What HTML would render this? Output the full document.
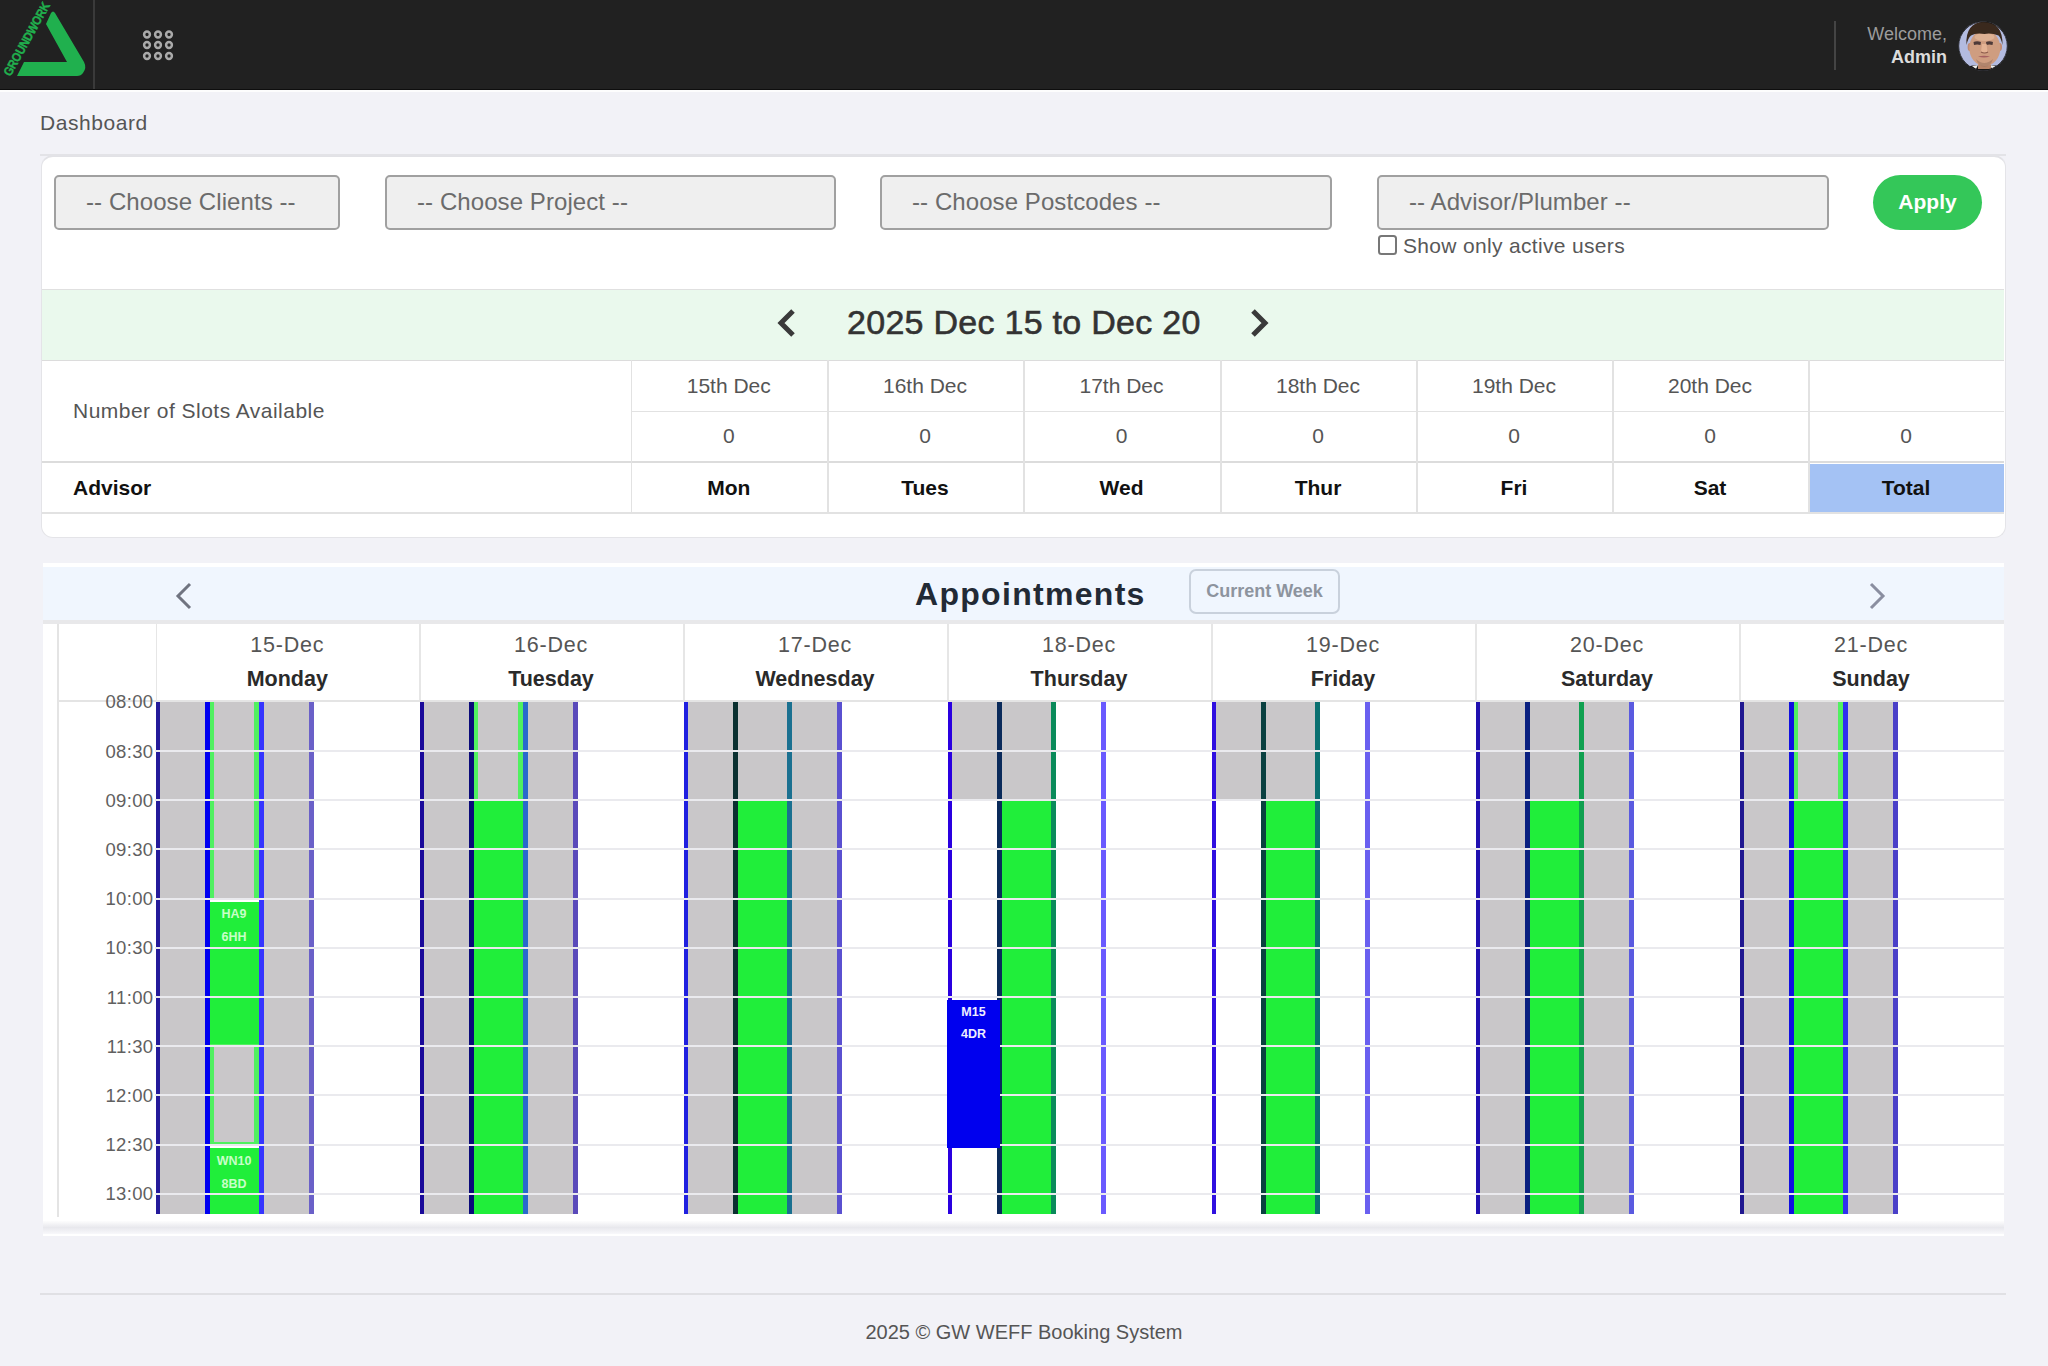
<!DOCTYPE html><html><head><meta charset="utf-8"><title>Dashboard</title><style>
*{box-sizing:border-box;margin:0;padding:0}
html,body{width:2048px;height:1366px;overflow:hidden}
body{background:#f2f2f7;position:relative;font-family:"Liberation Sans",sans-serif;color:#555}
.a{position:absolute}
.t{position:absolute;white-space:nowrap;line-height:1}
</style></head><body>
<div class="a" style="left:0;top:0;width:2048px;height:90px;background:#212121"></div>
<div class="a" style="left:92.5px;top:0;width:2px;height:89px;background:#3a3a3a"></div>
<div class="a" style="left:0;top:88.5px;width:2048px;height:1.5px;background:#0e0e0e"></div>
<div class="a" style="left:0;top:90px;width:2048px;height:2px;background:#fdfdfd"></div>
<svg class="a" style="left:0;top:0" width="92" height="90" viewBox="0 0 92 90">
<path d="M51 13 Q53 10 55 13 L84 62 Q87 68 83 73 Q81 76 77 76 L17 76 L24 62 L67 62 L46 24 Z" fill="#20b04e"/>
<text x="0" y="0" transform="translate(10.5,77) rotate(-61) scale(0.97,1.1)" font-family="Liberation Sans" font-weight="bold" font-size="11.5" fill="#20b04e" stroke="#20b04e" stroke-width="0.35" letter-spacing="-0.3">GROUNDWORK</text>
</svg>
<svg class="a" style="left:0;top:0" width="200" height="90"><circle cx="147" cy="34.5" r="2.9" fill="none" stroke="#aaaaaa" stroke-width="2.5"/><circle cx="158" cy="34.5" r="2.9" fill="none" stroke="#aaaaaa" stroke-width="2.5"/><circle cx="169" cy="34.5" r="2.9" fill="none" stroke="#aaaaaa" stroke-width="2.5"/><circle cx="147" cy="45" r="2.9" fill="none" stroke="#aaaaaa" stroke-width="2.5"/><circle cx="158" cy="45" r="2.9" fill="none" stroke="#aaaaaa" stroke-width="2.5"/><circle cx="169" cy="45" r="2.9" fill="none" stroke="#aaaaaa" stroke-width="2.5"/><circle cx="147" cy="56" r="2.9" fill="none" stroke="#aaaaaa" stroke-width="2.5"/><circle cx="158" cy="56" r="2.9" fill="none" stroke="#aaaaaa" stroke-width="2.5"/><circle cx="169" cy="56" r="2.9" fill="none" stroke="#aaaaaa" stroke-width="2.5"/></svg>
<div class="a" style="left:1834px;top:21px;width:1.5px;height:49px;background:#444"></div>
<div class="t" style="right:101px;top:25px;font-size:18px;color:#9c9c9c">Welcome,</div>
<div class="t" style="right:101px;top:48px;font-size:18px;font-weight:bold;color:#dcdcdc">Admin</div>
<svg class="a" style="left:1958px;top:20.5px" width="50" height="50" viewBox="0 0 50 50">
<defs><clipPath id="cc"><circle cx="25" cy="25" r="24.5"/></clipPath></defs>
<g clip-path="url(#cc)">
<rect width="50" height="50" fill="#b3bbe0"/>
<path d="M4 50 Q8 44 20 44 L33 44 Q44 44 48 50 Z" fill="#151515"/>
<path d="M14 45 L20 44 L18 48Z M38 45 L32 44 L34 48Z" fill="#eee"/>
<rect x="20" y="38" width="13" height="10" fill="#b88468"/>
<ellipse cx="11.8" cy="26" rx="2.2" ry="4" fill="#c08a70"/>
<ellipse cx="41.8" cy="26" rx="2.2" ry="4" fill="#c08a70"/>
<ellipse cx="26.8" cy="27" rx="15.5" ry="18" fill="#cf9d80"/>
<ellipse cx="26.5" cy="16" rx="10" ry="4" fill="#ddb092"/>
<path d="M8.5 24 Q7 2 26 0.5 Q45 1.5 44.5 24 Q43 17 40.5 14.5 Q33 11.5 26.5 13 Q18 11.5 13 14.5 Q10 17 8.5 24Z" fill="#3a291d"/>
<path d="M15.5 21 Q19 19.5 23 21 L22.5 24 Q19 23 16 24Z" fill="#4e3a38"/>
<path d="M28 21 Q31 19.5 35 21 L34.5 24 Q31 23 28.5 24Z" fill="#4e3a38"/>
<path d="M24 23 L23 31 Q26.5 33 29.5 31 L28.5 23Z" fill="#e4b394"/>
<path d="M23 31 Q26.5 33 30 31" stroke="#8a5a4a" stroke-width="1.2" fill="none"/>
<path d="M20 35.5 Q26 34 32 35.5 Q26 37.5 20 35.5Z" fill="#a56060"/>
<path d="M18 38 Q26 46 35 38 Q33 45 26.5 46 Q20 45 18 38Z" fill="#9c7460" opacity="0.6"/>
</g>
<circle cx="25" cy="25" r="24.3" fill="none" stroke="#141414" stroke-width="0.8"/>
</svg>
<div class="t" style="left:40px;top:111.5px;font-size:21px;color:#555;letter-spacing:0.55px">Dashboard</div>
<div class="a" style="left:41px;top:155px;width:1965px;height:383px;background:#fff;border:1px solid #e4e4e8;border-top:2px solid #e2e2e6;border-radius:12px"></div>
<div class="a" style="left:40px;top:154px;width:1966px;height:1.5px;background:#e3e3e7"></div>
<div class="a" style="left:54px;top:175px;width:286px;height:55px;background:#efefef;border:2px solid #a0a0a0;border-radius:5px"></div>
<div class="t" style="left:86px;top:190px;font-size:24px;color:#6b6b6b;letter-spacing:0.08px">-- Choose Clients --</div>
<div class="a" style="left:385px;top:175px;width:451px;height:55px;background:#efefef;border:2px solid #a0a0a0;border-radius:5px"></div>
<div class="t" style="left:417px;top:190px;font-size:24px;color:#6b6b6b;letter-spacing:0.08px">-- Choose Project --</div>
<div class="a" style="left:880px;top:175px;width:452px;height:55px;background:#efefef;border:2px solid #a0a0a0;border-radius:5px"></div>
<div class="t" style="left:912px;top:190px;font-size:24px;color:#6b6b6b;letter-spacing:0.08px">-- Choose Postcodes --</div>
<div class="a" style="left:1377px;top:175px;width:452px;height:55px;background:#efefef;border:2px solid #a0a0a0;border-radius:5px"></div>
<div class="t" style="left:1409px;top:190px;font-size:24px;color:#6b6b6b;letter-spacing:0.08px">-- Advisor/Plumber --</div>
<div class="a" style="left:1873px;top:175px;width:109px;height:55px;background:#34c759;border-radius:28px"></div>
<div class="t" style="left:1873px;width:109px;text-align:center;top:191px;font-size:21px;font-weight:bold;color:#fff">Apply</div>
<div class="a" style="left:1377.5px;top:234.5px;width:19.5px;height:20px;border:2px solid #777;border-radius:3.5px;background:#fff"></div>
<div class="t" style="left:1403px;top:235px;font-size:21px;color:#585858;letter-spacing:0.33px">Show only active users</div>
<div class="a" style="left:42px;top:289px;width:1962px;height:72px;background:#eaf9ed;border-top:1.5px solid #e0e0e0;border-bottom:1.5px solid #dcdcdc"></div>
<svg class="a" style="left:770px;top:305px" width="30" height="36"><polyline points="23,6 11,18 23,30" fill="none" stroke="#3a3a3a" stroke-width="5"/></svg>
<svg class="a" style="left:1246px;top:305px" width="30" height="36"><polyline points="7,6 19,18 7,30" fill="none" stroke="#3a3a3a" stroke-width="5"/></svg>
<div class="t" style="left:847px;top:305px;font-size:34px;color:#333;letter-spacing:0.28px;-webkit-text-stroke:0.6px #333">2025 Dec 15 to Dec 20</div>
<div class="a" style="left:1808.5px;top:463.5px;width:195.5px;height:48.5px;background:#a4c2f4"></div>
<div class="a" style="left:631px;top:411px;width:1373px;height:1px;background:#e2e2e2"></div>
<div class="a" style="left:42px;top:461px;width:1962px;height:2px;background:#dcdcdc"></div>
<div class="a" style="left:42px;top:512px;width:1962px;height:1.5px;background:#e2e2e2"></div>
<div class="a" style="left:630.5px;top:360px;width:1.5px;height:153px;background:#e2e2e2"></div>
<div class="a" style="left:827px;top:360px;width:1.5px;height:153px;background:#e2e2e2"></div>
<div class="a" style="left:1023px;top:360px;width:1.5px;height:153px;background:#e2e2e2"></div>
<div class="a" style="left:1220px;top:360px;width:1.5px;height:153px;background:#e2e2e2"></div>
<div class="a" style="left:1416px;top:360px;width:1.5px;height:153px;background:#e2e2e2"></div>
<div class="a" style="left:1612px;top:360px;width:1.5px;height:153px;background:#e2e2e2"></div>
<div class="a" style="left:1808px;top:360px;width:1.5px;height:153px;background:#e2e2e2"></div>
<div class="t" style="left:73px;top:400px;font-size:21px;color:#555;letter-spacing:0.47px">Number of Slots Available</div>
<div class="t" style="left:630.5px;width:196.5px;text-align:center;top:375px;font-size:21px;color:#555">15th Dec</div>
<div class="t" style="left:630.5px;width:196.5px;text-align:center;top:425px;font-size:21px;color:#555">0</div>
<div class="t" style="left:630.5px;width:196.5px;text-align:center;top:477px;font-size:21px;font-weight:bold;color:#111">Mon</div>
<div class="t" style="left:827px;width:196px;text-align:center;top:375px;font-size:21px;color:#555">16th Dec</div>
<div class="t" style="left:827px;width:196px;text-align:center;top:425px;font-size:21px;color:#555">0</div>
<div class="t" style="left:827px;width:196px;text-align:center;top:477px;font-size:21px;font-weight:bold;color:#111">Tues</div>
<div class="t" style="left:1023px;width:197px;text-align:center;top:375px;font-size:21px;color:#555">17th Dec</div>
<div class="t" style="left:1023px;width:197px;text-align:center;top:425px;font-size:21px;color:#555">0</div>
<div class="t" style="left:1023px;width:197px;text-align:center;top:477px;font-size:21px;font-weight:bold;color:#111">Wed</div>
<div class="t" style="left:1220px;width:196px;text-align:center;top:375px;font-size:21px;color:#555">18th Dec</div>
<div class="t" style="left:1220px;width:196px;text-align:center;top:425px;font-size:21px;color:#555">0</div>
<div class="t" style="left:1220px;width:196px;text-align:center;top:477px;font-size:21px;font-weight:bold;color:#111">Thur</div>
<div class="t" style="left:1416px;width:196px;text-align:center;top:375px;font-size:21px;color:#555">19th Dec</div>
<div class="t" style="left:1416px;width:196px;text-align:center;top:425px;font-size:21px;color:#555">0</div>
<div class="t" style="left:1416px;width:196px;text-align:center;top:477px;font-size:21px;font-weight:bold;color:#111">Fri</div>
<div class="t" style="left:1612px;width:196px;text-align:center;top:375px;font-size:21px;color:#555">20th Dec</div>
<div class="t" style="left:1612px;width:196px;text-align:center;top:425px;font-size:21px;color:#555">0</div>
<div class="t" style="left:1612px;width:196px;text-align:center;top:477px;font-size:21px;font-weight:bold;color:#111">Sat</div>
<div class="t" style="left:1808px;width:196px;text-align:center;top:425px;font-size:21px;color:#555">0</div>
<div class="t" style="left:1808px;width:196px;text-align:center;top:477px;font-size:21px;font-weight:bold;color:#111">Total</div>
<div class="t" style="left:73px;top:477px;font-size:21px;font-weight:bold;color:#111">Advisor</div>
<div class="a" style="left:43px;top:563px;width:1961px;height:673px;background:#fff"></div>
<div class="a" style="left:43px;top:567px;width:1961px;height:53px;background:#f0f6fe"></div>
<div class="a" style="left:43px;top:620px;width:1961px;height:4px;background:#e8e8ea"></div>
<div class="a" style="left:43px;top:1221px;width:1961px;height:13px;background:linear-gradient(#fdfdfd,#e8e8ed 50%,#f8f8fb)"></div>
<svg class="a" style="left:170px;top:578px" width="30" height="36"><polyline points="20,6 8,18 20,30" fill="none" stroke="#707480" stroke-width="3"/></svg>
<svg class="a" style="left:1862px;top:578px" width="30" height="36"><polyline points="9,6 21,18 9,30" fill="none" stroke="#8a8ea0" stroke-width="3"/></svg>
<div class="t" style="left:915px;top:578px;font-size:32px;font-weight:bold;color:#222a35;letter-spacing:1.3px">Appointments</div>
<div class="a" style="left:1189px;top:569px;width:151px;height:45px;border:2px solid #c9d1dc;border-radius:7px"></div>
<div class="t" style="left:1189px;width:151px;text-align:center;top:582px;font-size:18px;font-weight:bold;color:#8d949e">Current Week</div>
<div class="a" style="left:57px;top:624px;width:2px;height:593px;background:#e4e4e4"></div>
<div class="a" style="left:155.5px;top:624px;width:1.5px;height:77px;background:#e6e6e6"></div>
<div class="a" style="left:419px;top:624px;width:1.5px;height:77px;background:#e6e6e6"></div>
<div class="a" style="left:683px;top:624px;width:1.5px;height:77px;background:#e6e6e6"></div>
<div class="a" style="left:947px;top:624px;width:1.5px;height:77px;background:#e6e6e6"></div>
<div class="a" style="left:1211px;top:624px;width:1.5px;height:77px;background:#e6e6e6"></div>
<div class="a" style="left:1475px;top:624px;width:1.5px;height:77px;background:#e6e6e6"></div>
<div class="a" style="left:1739px;top:624px;width:1.5px;height:77px;background:#e6e6e6"></div>
<div class="a" style="left:58px;top:700px;width:1946px;height:2px;background:#e4e4e4"></div>
<div class="t" style="left:155.5px;width:263.5px;text-align:center;top:634.5px;font-size:21.5px;color:#555;letter-spacing:0.8px">15-Dec</div>
<div class="t" style="left:155.5px;width:263.5px;text-align:center;top:668.5px;font-size:21.5px;font-weight:bold;color:#2a2a2a">Monday</div>
<div class="t" style="left:419px;width:264px;text-align:center;top:634.5px;font-size:21.5px;color:#555;letter-spacing:0.8px">16-Dec</div>
<div class="t" style="left:419px;width:264px;text-align:center;top:668.5px;font-size:21.5px;font-weight:bold;color:#2a2a2a">Tuesday</div>
<div class="t" style="left:683px;width:264px;text-align:center;top:634.5px;font-size:21.5px;color:#555;letter-spacing:0.8px">17-Dec</div>
<div class="t" style="left:683px;width:264px;text-align:center;top:668.5px;font-size:21.5px;font-weight:bold;color:#2a2a2a">Wednesday</div>
<div class="t" style="left:947px;width:264px;text-align:center;top:634.5px;font-size:21.5px;color:#555;letter-spacing:0.8px">18-Dec</div>
<div class="t" style="left:947px;width:264px;text-align:center;top:668.5px;font-size:21.5px;font-weight:bold;color:#2a2a2a">Thursday</div>
<div class="t" style="left:1211px;width:264px;text-align:center;top:634.5px;font-size:21.5px;color:#555;letter-spacing:0.8px">19-Dec</div>
<div class="t" style="left:1211px;width:264px;text-align:center;top:668.5px;font-size:21.5px;font-weight:bold;color:#2a2a2a">Friday</div>
<div class="t" style="left:1475px;width:264px;text-align:center;top:634.5px;font-size:21.5px;color:#555;letter-spacing:0.8px">20-Dec</div>
<div class="t" style="left:1475px;width:264px;text-align:center;top:668.5px;font-size:21.5px;font-weight:bold;color:#2a2a2a">Saturday</div>
<div class="t" style="left:1739px;width:264px;text-align:center;top:634.5px;font-size:21.5px;color:#555;letter-spacing:0.8px">21-Dec</div>
<div class="t" style="left:1739px;width:264px;text-align:center;top:668.5px;font-size:21.5px;font-weight:bold;color:#2a2a2a">Sunday</div>
<div class="a" style="left:160px;top:701.7px;width:45px;height:512.0px;background:#c9c7c9;"></div>
<div class="a" style="left:209px;top:701.7px;width:50px;height:196.8px;background:#c9c7c9;border-left:5px solid #50f060;border-right:5px solid #50f060"></div>
<div class="a" style="left:209px;top:902.0px;width:50px;height:142.0px;background:#20ee3a;"></div>
<div class="a" style="left:209px;top:1044.0px;width:50px;height:100.5px;background:#c9c7c9;border:5px solid #50f060;border-top-width:3px;border-bottom-width:3px"></div>
<div class="a" style="left:209px;top:1148.0px;width:50px;height:65.7px;background:#20ee3a;"></div>
<div class="a" style="left:264px;top:701.7px;width:45px;height:512.0px;background:#c9c7c9;"></div>
<div class="a" style="left:155.5px;top:701.7px;width:4.5px;height:512.0px;background:#241a9a;"></div>
<div class="a" style="left:205px;top:701.7px;width:4.5px;height:512.0px;background:#0000f0;"></div>
<div class="a" style="left:259px;top:701.7px;width:5px;height:512.0px;background:#3535ff;"></div>
<div class="a" style="left:309px;top:701.7px;width:4.5px;height:512.0px;background:#6a60c8;"></div>
<div class="a" style="left:424px;top:701.7px;width:45px;height:512.0px;background:#c9c7c9;"></div>
<div class="a" style="left:473px;top:701.7px;width:50px;height:98.4px;background:#c9c7c9;border-left:5px solid #50f060;border-right:5px solid #50f060"></div>
<div class="a" style="left:473px;top:800.1px;width:50px;height:413.6px;background:#20ee3a;"></div>
<div class="a" style="left:528px;top:701.7px;width:45px;height:512.0px;background:#c9c7c9;"></div>
<div class="a" style="left:419.5px;top:701.7px;width:4.5px;height:512.0px;background:#1a0a9a;"></div>
<div class="a" style="left:469px;top:701.7px;width:4.5px;height:512.0px;background:#0a0a7a;"></div>
<div class="a" style="left:523px;top:701.7px;width:5px;height:512.0px;background:#2a6acc;"></div>
<div class="a" style="left:573px;top:701.7px;width:4.5px;height:512.0px;background:#5a4aba;"></div>
<div class="a" style="left:688px;top:701.7px;width:45px;height:512.0px;background:#c9c7c9;"></div>
<div class="a" style="left:737px;top:701.7px;width:50px;height:98.4px;background:#c9c7c9;"></div>
<div class="a" style="left:737px;top:800.1px;width:50px;height:413.6px;background:#20ee3a;"></div>
<div class="a" style="left:792px;top:701.7px;width:45px;height:512.0px;background:#c9c7c9;"></div>
<div class="a" style="left:683.5px;top:701.7px;width:4.5px;height:512.0px;background:#2020e0;"></div>
<div class="a" style="left:733px;top:701.7px;width:4.5px;height:512.0px;background:#0a3030;"></div>
<div class="a" style="left:787px;top:701.7px;width:5px;height:512.0px;background:#1a7090;"></div>
<div class="a" style="left:837px;top:701.7px;width:4.5px;height:512.0px;background:#5a50d0;"></div>
<div class="a" style="left:1480px;top:701.7px;width:45px;height:512.0px;background:#c9c7c9;"></div>
<div class="a" style="left:1529px;top:701.7px;width:50px;height:98.4px;background:#c9c7c9;"></div>
<div class="a" style="left:1529px;top:800.1px;width:50px;height:413.6px;background:#20ee3a;"></div>
<div class="a" style="left:1584px;top:701.7px;width:45px;height:512.0px;background:#c9c7c9;"></div>
<div class="a" style="left:1475.5px;top:701.7px;width:4.5px;height:512.0px;background:#2010b0;"></div>
<div class="a" style="left:1525px;top:701.7px;width:4.5px;height:512.0px;background:#0a2080;"></div>
<div class="a" style="left:1579px;top:701.7px;width:5px;height:512.0px;background:#10a050;"></div>
<div class="a" style="left:1629px;top:701.7px;width:4.5px;height:512.0px;background:#5a5ae0;"></div>
<div class="a" style="left:1744px;top:701.7px;width:45px;height:512.0px;background:#c9c7c9;"></div>
<div class="a" style="left:1793px;top:701.7px;width:50px;height:98.4px;background:#c9c7c9;border-left:5px solid #50f060;border-right:5px solid #50f060"></div>
<div class="a" style="left:1793px;top:800.1px;width:50px;height:413.6px;background:#20ee3a;"></div>
<div class="a" style="left:1848px;top:701.7px;width:45px;height:512.0px;background:#c9c7c9;"></div>
<div class="a" style="left:1739.5px;top:701.7px;width:4.5px;height:512.0px;background:#201890;"></div>
<div class="a" style="left:1789px;top:701.7px;width:4.5px;height:512.0px;background:#1010e0;"></div>
<div class="a" style="left:1843px;top:701.7px;width:5px;height:512.0px;background:#3030f0;"></div>
<div class="a" style="left:1893px;top:701.7px;width:4.5px;height:512.0px;background:#4a40c8;"></div>
<div class="a" style="left:952px;top:701.7px;width:45px;height:98.4px;background:#c9c7c9;"></div>
<div class="a" style="left:1001px;top:701.7px;width:50px;height:98.4px;background:#c9c7c9;"></div>
<div class="a" style="left:1001px;top:800.1px;width:50px;height:413.6px;background:#20ee3a;"></div>
<div class="a" style="left:947.5px;top:701.7px;width:4.5px;height:512.0px;background:#2a00e0;"></div>
<div class="a" style="left:997px;top:701.7px;width:4.5px;height:512.0px;background:#0a2a5a;"></div>
<div class="a" style="left:1051px;top:701.7px;width:5px;height:512.0px;background:#0a8a5a;"></div>
<div class="a" style="left:1101px;top:701.7px;width:4.5px;height:512.0px;background:#6a5aff;"></div>
<div class="a" style="left:1216px;top:701.7px;width:45px;height:98.4px;background:#c9c7c9;"></div>
<div class="a" style="left:1265px;top:701.7px;width:50px;height:98.4px;background:#c9c7c9;"></div>
<div class="a" style="left:1265px;top:800.1px;width:50px;height:413.6px;background:#20ee3a;"></div>
<div class="a" style="left:1211.5px;top:701.7px;width:4.5px;height:512.0px;background:#3010e0;"></div>
<div class="a" style="left:1261px;top:701.7px;width:4.5px;height:512.0px;background:#0a4040;"></div>
<div class="a" style="left:1315px;top:701.7px;width:5px;height:512.0px;background:#0a7070;"></div>
<div class="a" style="left:1365px;top:701.7px;width:4.5px;height:512.0px;background:#6a60f0;"></div>
<div class="a" style="left:155px;top:749.9px;width:1849px;height:2px;background:#eaeaee"></div>
<div class="a" style="left:155px;top:799.1px;width:1849px;height:2px;background:#eaeaee"></div>
<div class="a" style="left:155px;top:848.3px;width:1849px;height:2px;background:#eaeaee"></div>
<div class="a" style="left:155px;top:897.5px;width:1849px;height:2px;background:#eaeaee"></div>
<div class="a" style="left:155px;top:946.7px;width:1849px;height:2px;background:#eaeaee"></div>
<div class="a" style="left:155px;top:995.9px;width:1849px;height:2px;background:#eaeaee"></div>
<div class="a" style="left:155px;top:1045.1px;width:1849px;height:2px;background:#eaeaee"></div>
<div class="a" style="left:155px;top:1094.3px;width:1849px;height:2px;background:#eaeaee"></div>
<div class="a" style="left:155px;top:1143.5px;width:1849px;height:2px;background:#eaeaee"></div>
<div class="a" style="left:155px;top:1192.7px;width:1849px;height:2px;background:#eaeaee"></div>
<div class="a" style="left:947px;top:999.5px;width:53px;height:148.3px;background:#0000ee;"></div>
<div class="t" style="left:209px;width:50px;text-align:center;top:908.0px;font-size:12.5px;font-weight:bold;color:#c8ffc8">HA9</div>
<div class="t" style="left:209px;width:50px;text-align:center;top:930.5px;font-size:12.5px;font-weight:bold;color:#c8ffc8">6HH</div>
<div class="t" style="left:209px;width:50px;text-align:center;top:1155.0px;font-size:12.5px;font-weight:bold;color:#c8ffc8">WN10</div>
<div class="t" style="left:209px;width:50px;text-align:center;top:1177.5px;font-size:12.5px;font-weight:bold;color:#c8ffc8">8BD</div>
<div class="t" style="left:947px;width:53px;text-align:center;top:1005.5px;font-size:12.5px;font-weight:bold;color:#eef">M15</div>
<div class="t" style="left:947px;width:53px;text-align:center;top:1028.0px;font-size:12.5px;font-weight:bold;color:#eef">4DR</div>
<div class="t" style="right:1894.5px;top:693.4px;font-size:18.5px;color:#606060;letter-spacing:0.35px">08:00</div>
<div class="t" style="right:1894.5px;top:742.6px;font-size:18.5px;color:#606060;letter-spacing:0.35px">08:30</div>
<div class="t" style="right:1894.5px;top:791.8px;font-size:18.5px;color:#606060;letter-spacing:0.35px">09:00</div>
<div class="t" style="right:1894.5px;top:841.0px;font-size:18.5px;color:#606060;letter-spacing:0.35px">09:30</div>
<div class="t" style="right:1894.5px;top:890.2px;font-size:18.5px;color:#606060;letter-spacing:0.35px">10:00</div>
<div class="t" style="right:1894.5px;top:939.4px;font-size:18.5px;color:#606060;letter-spacing:0.35px">10:30</div>
<div class="t" style="right:1894.5px;top:988.6px;font-size:18.5px;color:#606060;letter-spacing:0.35px">11:00</div>
<div class="t" style="right:1894.5px;top:1037.8px;font-size:18.5px;color:#606060;letter-spacing:0.35px">11:30</div>
<div class="t" style="right:1894.5px;top:1087.0px;font-size:18.5px;color:#606060;letter-spacing:0.35px">12:00</div>
<div class="t" style="right:1894.5px;top:1136.2px;font-size:18.5px;color:#606060;letter-spacing:0.35px">12:30</div>
<div class="t" style="right:1894.5px;top:1185.4px;font-size:18.5px;color:#606060;letter-spacing:0.35px">13:00</div>
<div class="a" style="left:40px;top:1293px;width:1966px;height:1.5px;background:#e0e0e4"></div>
<div class="t" style="left:0;width:2048px;text-align:center;top:1322px;font-size:20px;color:#555">2025 © GW WEFF Booking System</div>
</body></html>
